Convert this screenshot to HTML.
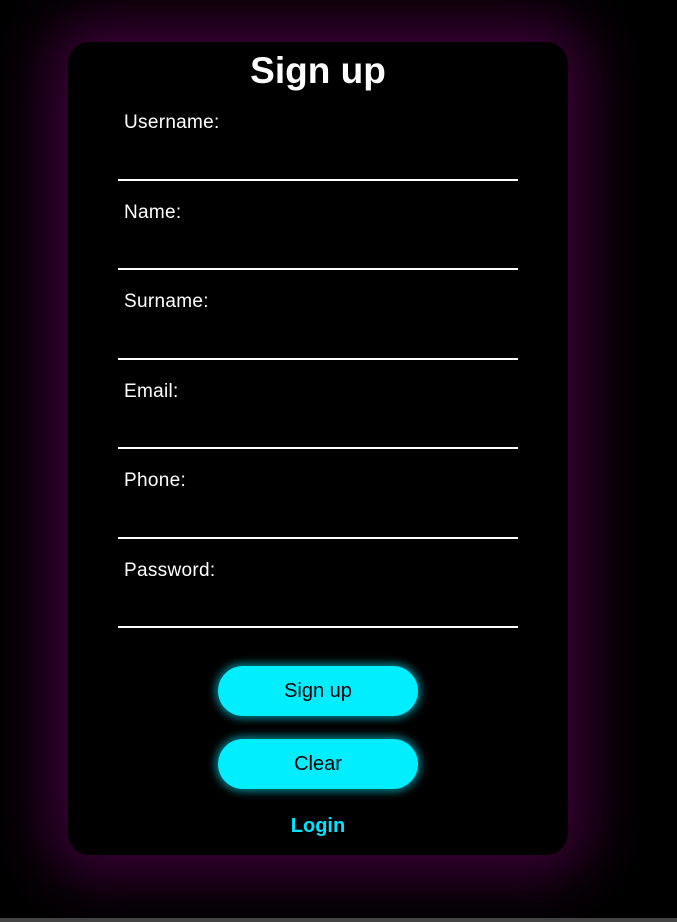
<!DOCTYPE html>
<html><head><style>
html,body{margin:0;padding:0;background:#000;width:677px;height:922px;overflow:hidden;font-family:"Liberation Sans",Arial,sans-serif;}
.card{position:absolute;left:68px;top:42px;width:500px;height:813px;background:#000;border-radius:22px;box-shadow:0 0 60px 20px #3d0038;}
h1{position:absolute;left:0;width:500px;top:8px;margin:0;text-align:center;color:#fff;font-size:37px;font-weight:bold;}
.lbl{position:absolute;left:56px;color:#fff;font-size:19px;letter-spacing:0.3px;}
.line{position:absolute;left:50px;width:400px;height:2px;background:#fff;}
.btn{position:absolute;left:150px;width:200px;height:50px;border-radius:25px;background:#00eeff;box-shadow:0 0 8px 3px rgba(0,200,220,0.6);color:#000;font-size:20px;text-align:center;line-height:50px;}
.login{position:absolute;left:0;width:500px;top:773px;text-align:center;color:#00e5ff;font-weight:bold;font-size:20px;}
.bar{position:absolute;left:0;top:918px;width:677px;height:4px;background:#444;}
</style></head><body>
<div class="card">
<h1>Sign up</h1>
<div class="lbl" style="top:70px">Username:</div><div class="line" style="top:137px"></div>
<div class="lbl" style="top:160px">Name:</div><div class="line" style="top:226px"></div>
<div class="lbl" style="top:249px">Surname:</div><div class="line" style="top:316px"></div>
<div class="lbl" style="top:339px">Email:</div><div class="line" style="top:405px"></div>
<div class="lbl" style="top:428px">Phone:</div><div class="line" style="top:495px"></div>
<div class="lbl" style="top:518px">Password:</div><div class="line" style="top:584px"></div>
<div class="btn" style="top:624px">Sign up</div>
<div class="btn" style="top:697px">Clear</div>
<div class="login">Login</div>
</div>
<div class="bar"></div>
</body></html>
